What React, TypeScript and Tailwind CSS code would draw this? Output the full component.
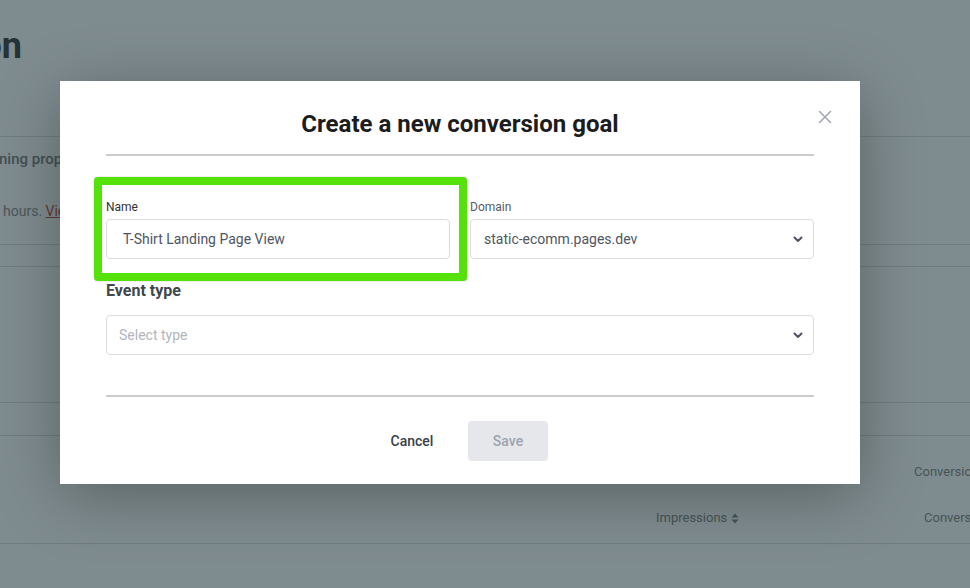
import React from 'react';

const Chevron: React.FC = () => (
  <svg width="10" height="7" viewBox="0 0 10 7" fill="none">
    <path d="M1.5 1.5l3.5 3.5 3.5-3.5" stroke="#4b5563" strokeWidth="2" strokeLinecap="round" strokeLinejoin="round" />
  </svg>
);

const SortIcon: React.FC = () => (
  <svg width="8" height="11" viewBox="0 0 8 11" className="ml-[4px] shrink-0">
    <path d="M0.5 4.5L4 0.5l3.5 4z" fill="currentColor" />
    <path d="M0.5 6.5L4 10.5l3.5-4z" fill="currentColor" />
  </svg>
);

const Background: React.FC = () => (
  <div className="text-[14px] leading-[20px]">
    <div className="h-[137px] border-b border-[#dddddd]">
      <div className="flex w-[22px] justify-end overflow-hidden pt-[28px]">
        <span className="shrink-0 whitespace-nowrap text-[36px] font-bold leading-[36px] text-[#3a3a3a]">Conversion</span>
      </div>
    </div>
    <div className="h-[108px] border-b border-[#dddddd] pt-[12px] whitespace-nowrap">
      <div className="-ml-[1px] text-[15px] font-medium text-[#7a7a7a]">ning properly</div>
      <div className="mt-[32px] pl-[3px] text-[#8c8c8c]">
        hours. <span className="text-[#c44a3a] underline">View details</span>
      </div>
    </div>
    <div className="h-[22px] border-b border-[#dddddd]" />
    <div className="h-[136px] border-b border-[#dddddd]" />
    <div className="h-[33px] border-b border-[#dddddd]" />
    <div className="h-[108px] overflow-hidden border-b border-[#dddddd] whitespace-nowrap text-[13px] text-[#848484]">
      <div className="mt-[26px] pl-[914px]">Conversion rate</div>
      <div className="mt-[26px] flex">
        <div className="w-[656px] shrink-0" />
        <div className="flex w-[268px] shrink-0 items-center">
          Impressions
          <SortIcon />
        </div>
        <div className="shrink-0">Conversions</div>
      </div>
    </div>
  </div>
);

const App: React.FC = () => {
  return (
    <div className="relative h-[588px] w-[970px] overflow-hidden bg-white font-['Roboto',sans-serif]">
      <Background />
      <div className="absolute inset-0 bg-[#162e33]/55">
        <div className="pl-[60px] pt-[81px]">
          <div className="relative h-[403px] w-[800px] bg-white px-[46px] pt-[27px] shadow-[0_12px_60px_rgba(0,0,0,0.3)]">
            <button className="absolute right-[28px] top-[29px] text-[#a3a9b3]">
              <svg width="14" height="14" viewBox="0 0 14 14">
                <path d="M1.5 1.5l11 11M12.5 1.5l-11 11" stroke="currentColor" strokeWidth="1.6" strokeLinecap="round" />
              </svg>
            </button>

            <h2 className="text-center text-[24px] font-bold leading-[32px] text-[#1c1c1c]">
              Create a new conversion goal
            </h2>
            <div className="mt-[14px] h-[2px] bg-[#cccccc]" />

            <div className="mt-[43px] grid grid-cols-2 gap-5">
              <div className="relative">
                <div className="absolute left-[-12px] right-[-17px] top-[-22px] bottom-[-22px] rounded-[4px] border-[8px] border-[#55e20a] shadow-[0_0_1px_rgba(0,0,0,0.6)]" />
                <label className="mb-[4px] block text-[12px] leading-[16px] text-[#333333]">Name</label>
                <div className="flex h-10 items-center rounded-[4px] border border-[#dcdcdc] px-4 text-[14px] text-[#4f5563]">
                  T-Shirt Landing Page View
                </div>
              </div>
              <div>
                <label className="mb-[4px] block text-[12px] leading-[16px] text-[#555b63]">Domain</label>
                <div className="flex h-10 items-center justify-between rounded-[4px] border border-[#dcdcdc] pl-[13px] pr-[10px] text-[14px] text-[#4f5563]">
                  <span>static-ecomm.pages.dev</span>
                  <Chevron />
                </div>
              </div>
            </div>

            <div className="mt-[20px] text-[16px] font-bold leading-[24px] text-[#3f474f]">Event type</div>
            <div className="mt-[12px] flex h-10 items-center justify-between rounded-[4px] border border-[#dcdcdc] pl-[12px] pr-[10px] text-[14px] text-[#b1b6bd]">
              <span>Select type</span>
              <Chevron />
            </div>

            <div className="mt-[40px] h-[2px] bg-[#cccccc]" />

            <div className="mt-[24px] flex justify-center gap-4">
              <button className="h-10 w-20 text-[14px] font-medium text-[#3a4048]">Cancel</button>
              <button className="h-10 w-20 rounded-[4px] bg-[#e5e7eb] text-[14px] font-medium text-[#9ca3af]">Save</button>
            </div>
          </div>
        </div>
      </div>
    </div>
  );
};

export default App;
